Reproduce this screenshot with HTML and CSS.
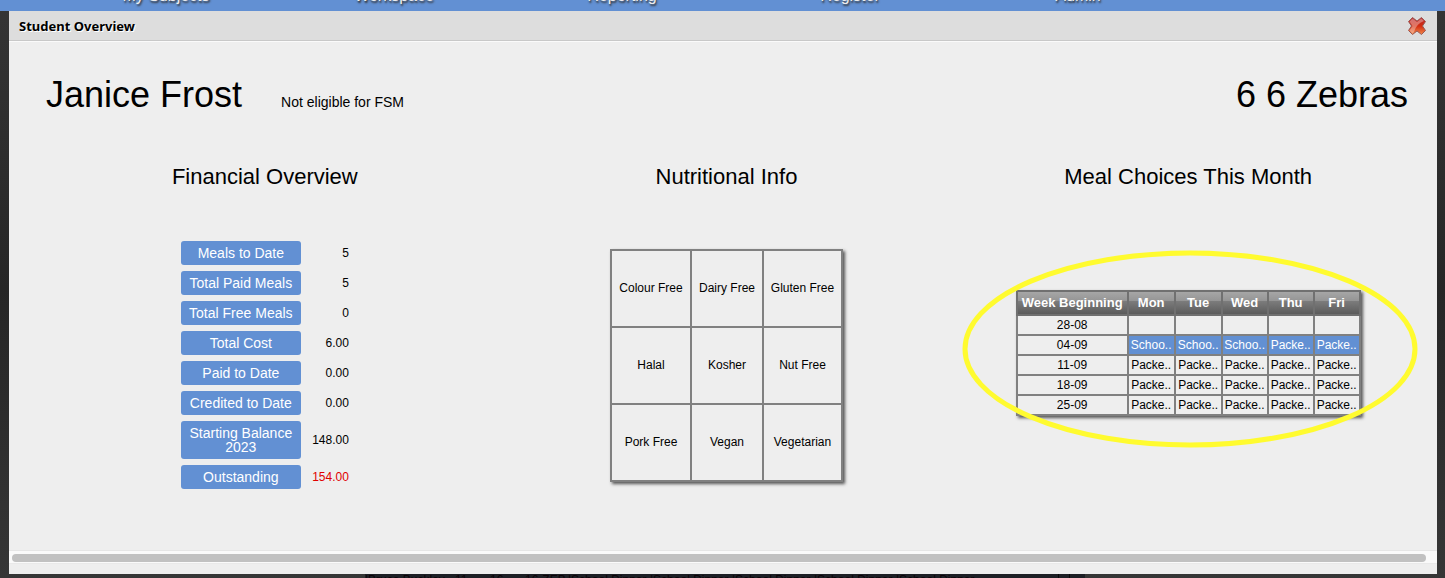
FILE: index.html
```
<!DOCTYPE html>
<html lang="en">
<head>
<meta charset="utf-8">
<title>Student Overview</title>
<link rel="stylesheet" href="styles.css">
</head>
<body>
<nav class="topbar">
  <a href="#">My Subjects</a>
  <a href="#">Workspace</a>
  <a href="#">Reporting</a>
  <a href="#">Register</a>
  <a href="#">Admin</a>
</nav>
<main class="dialog">
  <header class="dialog-header">
    <h1 class="dialog-title">Student Overview</h1>
    <button class="close" type="button" aria-label="Close">
      <svg viewBox="0 0 20 20" width="20" height="20">
        <defs>
          <linearGradient id="red" x1="0" y1="0" x2="0" y2="1">
            <stop offset="0" stop-color="#b4262c"/>
            <stop offset="0.5" stop-color="#d32c10"/>
            <stop offset="1" stop-color="#f08a4c"/>
          </linearGradient>
        </defs>
        <path d="M5.500 1.500 L10 5 L14.500 1.500 L18.500 5.500 L15.500 10 L18.500 14.500 L14.500 18.500 L10 15 L5.500 18.500 L1.500 14.500 L4.500 10 L1.500 5.500 Z" fill="url(#red)" stroke="#9a5a55" stroke-width="1"/>
        <path d="M5.500 2.500 L10 6 L14.500 2.500 L17 5 Q9 8 7 16 L5.500 17.500 L2.500 14.500 L5.500 10 L2.500 5.500 Z" fill="#fff" opacity="0.350"/>
      </svg>
    </button>
  </header>
  <div class="content">
    <div class="student">
      <h2 class="big">Janice Frost</h2>
      <p class="fsm">Not eligible for FSM</p>
      <p class="big class-name">6 6 Zebras</p>
    </div>
    <div class="columns">
      <section class="column">
        <h3>Financial Overview</h3>
        <div class="panel">
          <table class="finance">
            <tr><th scope="row">Meals to Date</th><td>5</td></tr>
            <tr><th scope="row">Total Paid Meals</th><td>5</td></tr>
            <tr><th scope="row">Total Free Meals</th><td>0</td></tr>
            <tr><th scope="row">Total Cost</th><td>6.00</td></tr>
            <tr><th scope="row">Paid to Date</th><td>0.00</td></tr>
            <tr><th scope="row">Credited to Date</th><td>0.00</td></tr>
            <tr><th scope="row">Starting Balance 2023</th><td>148.00</td></tr>
            <tr><th scope="row">Outstanding</th><td class="due">154.00</td></tr>
          </table>
        </div>
      </section>
      <section class="column">
        <h3>Nutritional Info</h3>
        <div class="panel">
          <table class="lined nutrition">
            <colgroup><col class="n1"><col class="n2"><col class="n3"></colgroup>
            <tr><td>Colour Free</td><td>Dairy Free</td><td>Gluten Free</td></tr>
            <tr><td>Halal</td><td>Kosher</td><td>Nut Free</td></tr>
            <tr><td>Pork Free</td><td>Vegan</td><td>Vegetarian</td></tr>
          </table>
        </div>
      </section>
      <section class="column">
        <h3>Meal Choices This Month</h3>
        <div class="panel">
          <div class="meals-wrap">
            <table class="lined meals">
              <colgroup><col class="week"><col class="early"><col class="early"><col class="late"><col class="late"><col class="late"></colgroup>
              <thead>
                <tr><th>Week Beginning</th><th>Mon</th><th>Tue</th><th>Wed</th><th>Thu</th><th>Fri</th></tr>
              </thead>
              <tbody>
                <tr><td>28-08</td><td></td><td></td><td></td><td></td><td></td></tr>
                <tr class="current"><td>04-09</td><td>Schoo..</td><td>Schoo..</td><td>Schoo..</td><td>Packe..</td><td>Packe..</td></tr>
                <tr><td>11-09</td><td>Packe..</td><td>Packe..</td><td>Packe..</td><td>Packe..</td><td>Packe..</td></tr>
                <tr><td>18-09</td><td>Packe..</td><td>Packe..</td><td>Packe..</td><td>Packe..</td><td>Packe..</td></tr>
                <tr><td>25-09</td><td>Packe..</td><td>Packe..</td><td>Packe..</td><td>Packe..</td><td>Packe..</td></tr>
              </tbody>
            </table>
            <svg class="ring" viewBox="0 0 456 198" width="456" height="198" aria-hidden="true">
              <ellipse cx="228" cy="99" rx="225" ry="96" fill="none" stroke="#fffb2f" stroke-width="5"/>
            </svg>
          </div>
        </div>
      </section>
    </div>
  </div>
  <div class="scroll-track"><div class="scroll-thumb"></div></div>
</main>
<div class="behind">
  <div class="behind-row">
    <span class="pupil">|Bruce Buckley</span><span class="num">11</span><span class="num">16</span><span class="group">16-ZEB</span><span class="meal">|School Dinner</span><span class="meal">|School Dinner</span><span class="meal">|School Dinner</span><span class="meal">|School Dinner</span><span class="meal">|School Dinner</span><span class="tail"></span>
  </div>
</div>
</body>
</html>
```
FILE: styles.css
```
* { box-sizing: border-box; }

body {
  margin: 0;
  min-height: 100vh;
  display: flex;
  flex-direction: column;
  background: linear-gradient(#353535, #262626 50%, #363636);
  color: #000;
  font-family: "Liberation Sans", Arial, sans-serif;
  font-size: 12px;
}

h1, h2, h3, p { margin: 0; font-weight: normal; }

.topbar {
  flex: none;
  height: 11px;
  padding: 0 25px 0 52px;
  display: grid;
  grid-template-columns: repeat(6, 1fr);
  grid-template-rows: 100%;
  align-items: end;
  overflow: hidden;
  background: #6290d3;
}
.topbar a {
  padding-bottom: 6px;
  color: #eee;
  font-size: 16px;
  line-height: 18px;
  text-align: center;
  text-decoration: none;
  text-shadow: 1px 2px 2px #333;
}

.dialog {
  flex: 1;
  margin: 0 8px 0 9px;
  padding-bottom: 10px;
  display: flex;
  flex-direction: column;
  background: #eee;
}

.dialog-header {
  height: 30px;
  padding: 0 10px;
  display: flex;
  align-items: center;
  justify-content: space-between;
  background: #ddd;
  border-bottom: 1px solid #c8c8c8;
  box-shadow: 0 1px #fafafa;
}
.dialog-title {
  font-family: "Noto Sans", sans-serif;
  font-size: 13px;
  font-weight: bold;
  text-shadow: 1px 1px #fff;
}
.close {
  padding: 0;
  border: 0;
  background: none;
  line-height: 0;
}

.content {
  flex: 1;
  padding: 33px 18px 0 25px;
}

.student {
  padding: 0 11px 0 12px;
  display: flex;
  align-items: baseline;
  gap: 39px;
}
.big { font-size: 36px; line-height: 42px; }
.fsm { font-size: 14px; }
.class-name { margin-left: auto; }

.columns {
  margin-top: 49px;
  display: grid;
  grid-template-columns: repeat(3, 1fr);
}
.column {
  display: flex;
  flex-direction: column;
  align-items: center;
}
.column h3 { font-size: 22px; line-height: 24px; }
.panel {
  height: 260px;
  margin-top: 46px;
  display: flex;
  align-items: center;
}

.finance {
  border-collapse: separate;
  border-spacing: 0 6px;
}
.finance th {
  width: 120px;
  padding: 5px;
  border-radius: 3px;
  background: #6290d3;
  color: #fff;
  font-size: 14px;
  font-weight: normal;
  line-height: 14px;
}
.finance td {
  width: 48px;
  padding: 0;
  text-align: right;
}
.finance .due { color: #e00000; }

.lined {
  border-collapse: collapse;
  table-layout: fixed;
  box-shadow: 2px 2px 3px #555;
  text-align: center;
}
.lined th, .lined td {
  padding: 0;
  border: 2px solid #808080;
  background: #eee;
}

.nutrition { width: 233px; }
.nutrition td { height: 77px; }
.n1 { width: 80px; }
.n2 { width: 72px; }
.n3 { width: 79px; }

.meals-wrap {
  position: relative;
  margin-bottom: 25px;
}
.meals { width: 345px; }
.week { width: 111px; }
.early { width: 47px; }
.late { width: 46px; }
.meals td {
  height: 20px;
  line-height: 14px;
}
.meals th {
  height: 24px;
  border-color: #707070;
  background: linear-gradient(#a6a6a6, #949494 42%, #7c7c7c 42%, #5c5c5c);
  color: #fff;
  font-size: 13px;
  line-height: 16px;
}
.meals .current td + td {
  background: #6290d3;
  color: #fff;
}
.ring {
  position: absolute;
  top: -40px;
  left: -54px;
  pointer-events: none;
}

.scroll-track {
  height: 14px;
  padding: 3px 11px 2px 3px;
  border-top: 1px solid #e6e6e6;
  border-bottom: 1px solid #e9e9e9;
  background: #fafafa;
}
.scroll-thumb {
  height: 8px;
  border-radius: 4px;
  background: #c1c1c1;
}

.behind {
  flex: none;
  height: 4px;
  padding-left: 365px;
  overflow: hidden;
}
.behind-row {
  width: 720px;
  display: flex;
  background: #1d1f25;
  color: #0c0307;
  line-height: 12px;
  white-space: nowrap;
}
.pupil { width: 90px; }
.num { width: 35px; }
.group { width: 43px; }
.meal { width: 82px; }
.tail {
  width: 12px;
  margin-left: 80px;
  border: solid #080808;
  border-width: 0 1px;
}
```
